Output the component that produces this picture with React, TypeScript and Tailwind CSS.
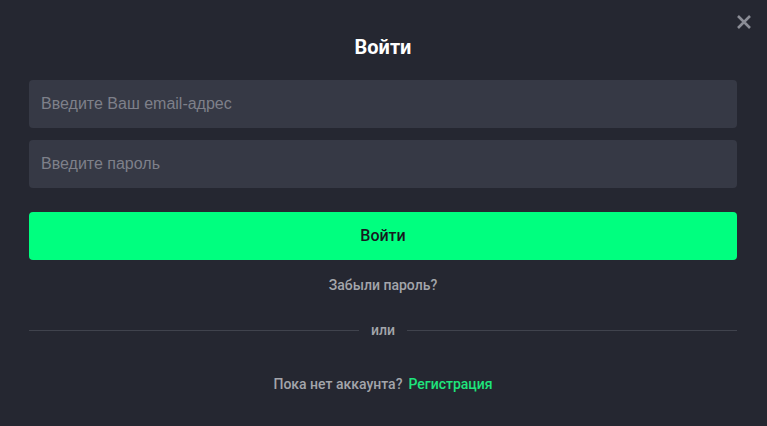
import { useState } from "react";

export default function App() {
    const [email, setEmail] = useState("");
    const [password, setPassword] = useState("");

    return (
        <div className="w-[767px] h-[426px] bg-[#252731] relative pl-[29px] pr-[30px] font-['Roboto',sans-serif]">
            <button
                type="button"
                className="absolute right-[15px] top-[14px] w-[16px] h-[16px] flex items-center justify-center"
            >
                <svg width="16" height="16" viewBox="0 0 16 16">
                    <path d="M2 2L14 14M14 2L2 14" stroke="#8a8c95" strokeWidth="2.6" strokeLinecap="butt" />
                </svg>
            </button>

            <h3 className="pt-[36px] text-center text-white text-[20px] leading-[22px] font-bold">Войти</h3>

            <form className="mt-[22px] flex flex-col gap-[12px]" onSubmit={e => e.preventDefault()}>
                <input
                    type="email"
                    value={email}
                    onChange={e => setEmail(e.target.value)}
                    placeholder="Введите Ваш email-адрес"
                    className="w-full h-[48px] rounded-[4px] bg-[#363945] px-[12px] text-[16px] text-white placeholder:text-[#7e808a] font-['Liberation_Sans',sans-serif] outline-none"
                />
                <input
                    type="password"
                    value={password}
                    onChange={e => setPassword(e.target.value)}
                    placeholder="Введите пароль"
                    className="w-full h-[48px] rounded-[4px] bg-[#363945] px-[12px] text-[16px] text-white placeholder:text-[#7e808a] font-['Liberation_Sans',sans-serif] outline-none"
                />
                <button
                    type="submit"
                    className="mt-[12px] w-full h-[48px] rounded-[4px] bg-[#00ff7f] text-[#17191f] text-[16px] font-medium"
                >
                    Войти
                </button>
            </form>

            <p className="mt-[15px] text-center text-[14px] leading-[20px] text-[#a3a5ab] font-medium">Забыли пароль?</p>

            <div className="mt-[25px] flex items-center gap-[12px]">
                <div className="flex-1 h-px bg-[#40434d]" />
                <span className="text-[14px] leading-[20px] text-[#a3a5ab] font-medium">или</span>
                <div className="flex-1 h-px bg-[#40434d]" />
            </div>

            <p className="mt-[34px] text-center text-[14px] leading-[20px] text-[#a3a5ab] font-medium">
                Пока нет аккаунта?
                <a href="#" className="ml-[6px] text-[#1ee57c]">Регистрация</a>
            </p>
        </div>
    );
}
